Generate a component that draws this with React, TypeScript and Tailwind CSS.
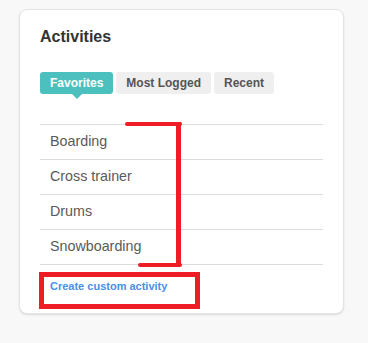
import React from "react";

const activities = ["Boarding", "Cross trainer", "Drums", "Snowboarding"];
const tabs = ["Favorites", "Most Logged", "Recent"];

export default function App() {
  return (
    <div
      className="relative w-[368px] h-[343px] bg-[#f8f8f8] pt-[9px] pl-[19px]"
      style={{ fontFamily: '"Liberation Sans", Arial, sans-serif' }}
    >
      <div className="w-[325px] h-[305px] bg-white border border-[#e4e4e4] rounded-[8px] shadow-[0_1px_2px_rgba(0,0,0,0.12)] px-[20px] pt-[17px]">
        <h2 className="text-[16px] leading-[20px] font-bold text-[#333]">Activities</h2>

        {/* tabs */}
        <div className="flex gap-[3px] mt-[25px]">
          {tabs.map((t, i) => (
            <div
              key={t}
              className={
                i === 0
                  ? "relative h-[22px] px-[10px] flex items-center rounded-[3px] bg-[#4cc0be] text-white text-[12px] font-bold"
                  : "h-[22px] px-[10px] flex items-center rounded-[3px] bg-[#efefef] text-[#555] text-[12px] font-bold"
              }
            >
              {t}
              {i === 0 && (
                <span className="absolute left-1/2 -translate-x-1/2 top-[22px] w-0 h-0 border-l-[5px] border-r-[5px] border-t-[5px] border-l-transparent border-r-transparent border-t-[#4cc0be]" />
              )}
            </div>
          ))}
        </div>

        {/* list */}
        <ul className="mt-[30px] border-t border-[#dcdcdc]">
          {activities.map((a) => (
            <li
              key={a}
              className="h-[35px] flex items-center pl-[10px] border-b border-[#dcdcdc] text-[14.3px] text-[#5a5a5a]"
            >
              {a}
            </li>
          ))}
        </ul>

        <a className="block mt-[14px] pl-[10px] text-[11px] leading-[14px] font-bold text-[#4a8fe7]">
          Create custom activity
        </a>
      </div>

      {/* red annotations */}
      <div className="absolute left-[125px] top-[122px] w-[57px] h-[4px] bg-[#ee1c25] rounded-[2px]" />
      <div className="absolute left-[176px] top-[122px] w-[5px] h-[144px] bg-[#ee1c25]" />
      <div className="absolute left-[138px] top-[263px] w-[44px] h-[4px] bg-[#ee1c25] rounded-[2px]" />
      <div className="absolute left-[39px] top-[272px] w-[161px] h-[37px] border-[5px] border-[#ee1c25]" />
    </div>
  );
}
